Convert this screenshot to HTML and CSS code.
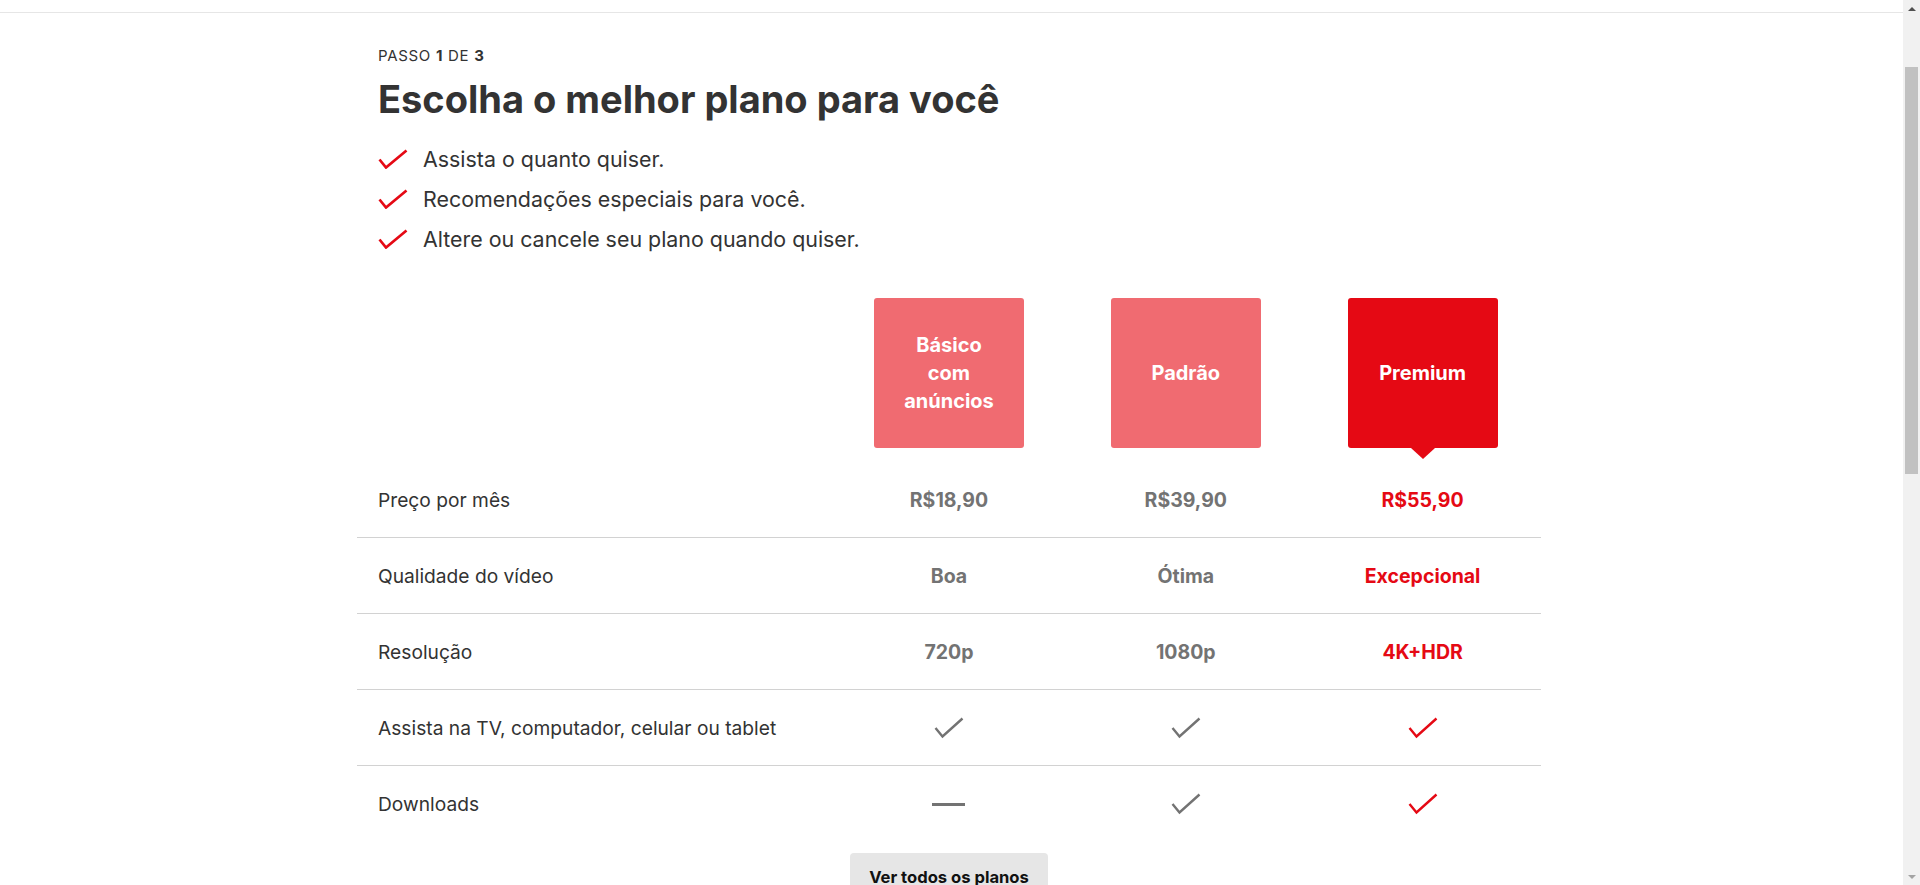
FILE: index.html
```html
<!DOCTYPE html>
<html lang="pt-BR">
<head>
<meta charset="utf-8">
<title>Escolha o melhor plano para você</title>
<link rel="stylesheet" href="styles.css">
</head>
<body>
<div class="viewport">
  <div class="page">
    <div class="header-edge"></div>
    <main class="plans">
      <div class="intro">
        <div class="step">PASSO <b>1</b> DE <b>3</b></div>
        <h1 class="title">Escolha o melhor plano para você</h1>
        <ul class="perks">
          <li><svg class="perk-check" viewBox="0 0 30 20"><polyline points="1.5,10.5 8,18.5 28.5,1.5"/></svg><span>Assista o quanto quiser.</span></li>
          <li><svg class="perk-check" viewBox="0 0 30 20"><polyline points="1.5,10.5 8,18.5 28.5,1.5"/></svg><span>Recomendações especiais para você.</span></li>
          <li><svg class="perk-check" viewBox="0 0 30 20"><polyline points="1.5,10.5 8,18.5 28.5,1.5"/></svg><span>Altere ou cancele seu plano quando quiser.</span></li>
        </ul>
      </div>

      <div class="grid">
        <div class="row row-head">
          <div class="cell label"></div>
          <div class="cell"><div class="choice">Básico com anúncios</div></div>
          <div class="cell"><div class="choice">Padrão</div></div>
          <div class="cell"><div class="choice selected">Premium</div></div>
        </div>
        <div class="row">
          <div class="cell label">Preço por mês</div>
          <div class="cell value">R$18,90</div>
          <div class="cell value">R$39,90</div>
          <div class="cell value on">R$55,90</div>
        </div>
        <div class="row">
          <div class="cell label">Qualidade do vídeo</div>
          <div class="cell value">Boa</div>
          <div class="cell value">Ótima</div>
          <div class="cell value on">Excepcional</div>
        </div>
        <div class="row">
          <div class="cell label">Resolução</div>
          <div class="cell value">720p</div>
          <div class="cell value">1080p</div>
          <div class="cell value on">4K+HDR</div>
        </div>
        <div class="row">
          <div class="cell label">Assista na TV, computador, celular ou tablet</div>
          <div class="cell value"><svg class="tick" viewBox="0 0 30 22"><polyline points="1.5,11 8.5,19.5 28.5,1.5"/></svg></div>
          <div class="cell value"><svg class="tick" viewBox="0 0 30 22"><polyline points="1.5,11 8.5,19.5 28.5,1.5"/></svg></div>
          <div class="cell value on"><svg class="tick" viewBox="0 0 30 22"><polyline points="1.5,11 8.5,19.5 28.5,1.5"/></svg></div>
        </div>
        <div class="row last">
          <div class="cell label">Downloads</div>
          <div class="cell value"><span class="dash"></span></div>
          <div class="cell value"><svg class="tick" viewBox="0 0 30 22"><polyline points="1.5,11 8.5,19.5 28.5,1.5"/></svg></div>
          <div class="cell value on"><svg class="tick" viewBox="0 0 30 22"><polyline points="1.5,11 8.5,19.5 28.5,1.5"/></svg></div>
        </div>
      </div>

      <div class="cta">
        <button class="all-plans" type="button">Ver todos os planos</button>
      </div>
    </main>
  </div>
  <div class="scrollbar">
    <div class="sb-btn"><span class="sb-up"></span></div>
    <div class="sb-track">
      <div class="sb-gap-top"></div>
      <div class="sb-thumb"></div>
      <div class="sb-gap-bottom"></div>
    </div>
    <div class="sb-btn"><span class="sb-down"></span></div>
  </div>
</div>
</body>
</html>
```

FILE: styles.css
```css
* { box-sizing: border-box; }

html, body {
  margin: 0;
  padding: 0;
  height: 885px;
  overflow: hidden;
  background: #fff;
  font-family: Inter, "Noto Sans", Arial, sans-serif;
  color: #333;
}

.viewport {
  display: flex;
  width: 1920px;
  height: 885px;
}

.page {
  flex: 1;
  min-width: 0;
  overflow: hidden;
  padding-right: 5px;
}

.header-edge {
  height: 13px;
  border-bottom: 1px solid #e6e6e6;
  margin-right: -5px;
}

.plans {
  width: 1184px;
  margin: 0 auto;
}

.intro {
  padding: 0 21px;
}

.step {
  margin-top: 35px;
  font-size: 15px;
  line-height: 16px;
  color: #333;
  letter-spacing: 0.7px;
}

.step b { font-weight: 700; }

.title {
  margin: 13px 0 0;
  font-size: 38px;
  line-height: 44px;
  font-weight: 700;
  color: #333;
}

.perks {
  list-style: none;
  margin: 18px 0 0;
  padding: 0;
}

.perks li {
  display: flex;
  align-items: center;
  height: 40px;
  font-size: 21.4px;
  color: #333;
}

.perk-check {
  width: 30px;
  height: 20px;
  margin-right: 15px;
  flex: none;
}

.perk-check polyline {
  fill: none;
  stroke: #e50914;
  stroke-width: 2.7;
}

.grid {
  margin-top: 39px;
}

.row {
  display: grid;
  grid-template-columns: 40% 20% 20% 20%;
  height: 76px;
  border-bottom: 1px solid #d2d2d2;
}

.row.last { border-bottom: none; }

.row-head {
  height: 164px;
  border-bottom: none;
}

.cell {
  display: flex;
  align-items: center;
  justify-content: center;
}

.cell.label {
  justify-content: flex-start;
  padding-left: 21px;
  font-size: 19.2px;
  color: #333;
}

.row-head .cell { align-items: flex-start; }

.choice {
  position: relative;
  width: 150px;
  height: 150px;
  border-radius: 3px;
  background: #f06b71;
  color: #fff;
  font-weight: 700;
  font-size: 20px;
  line-height: 28px;
  text-align: center;
  display: flex;
  align-items: center;
  justify-content: center;
  padding: 0 20px;
}

.choice.selected { background: #e50914; }

.choice.selected::after {
  content: "";
  position: absolute;
  left: 50%;
  top: 100%;
  margin-left: -12px;
  border-left: 12px solid transparent;
  border-right: 12px solid transparent;
  border-top: 11px solid #e50914;
}

.value {
  font-size: 19.5px;
  font-weight: 700;
  color: #737373;
}

.value.on { color: #e50914; }

.tick {
  width: 30px;
  height: 22px;
}

.tick polyline {
  fill: none;
  stroke: #737373;
  stroke-width: 2.4;
}

.value.on .tick polyline { stroke: #e50914; }

.dash {
  display: block;
  width: 33px;
  height: 3px;
  background: #737373;
}

.cta {
  display: flex;
  justify-content: center;
  margin-top: 11px;
}

.all-plans {
  border: none;
  border-radius: 4px;
  background: #e6e6e6;
  color: #111;
  font-family: inherit;
  font-size: 16.6px;
  font-weight: 700;
  height: 48px;
  width: 198px;
  padding: 0;
}

/* fake browser scrollbar */
.scrollbar {
  width: 17px;
  flex: none;
  display: flex;
  flex-direction: column;
  background: #f1f1f1;
}

.sb-btn {
  height: 17px;
  display: flex;
  align-items: center;
  justify-content: center;
}

.sb-up {
  border-left: 4px solid transparent;
  border-right: 4px solid transparent;
  border-bottom: 4px solid #505050;
}

.sb-down {
  border-left: 4px solid transparent;
  border-right: 4px solid transparent;
  border-top: 4px solid #a3a3a3;
}

.sb-track {
  flex: 1;
  display: flex;
  flex-direction: column;
  padding: 0 2px;
}

.sb-gap-top { height: 50px; }

.sb-thumb {
  height: 407px;
  background: #c1c1c1;
}

.sb-gap-bottom { flex: 1; }
```
